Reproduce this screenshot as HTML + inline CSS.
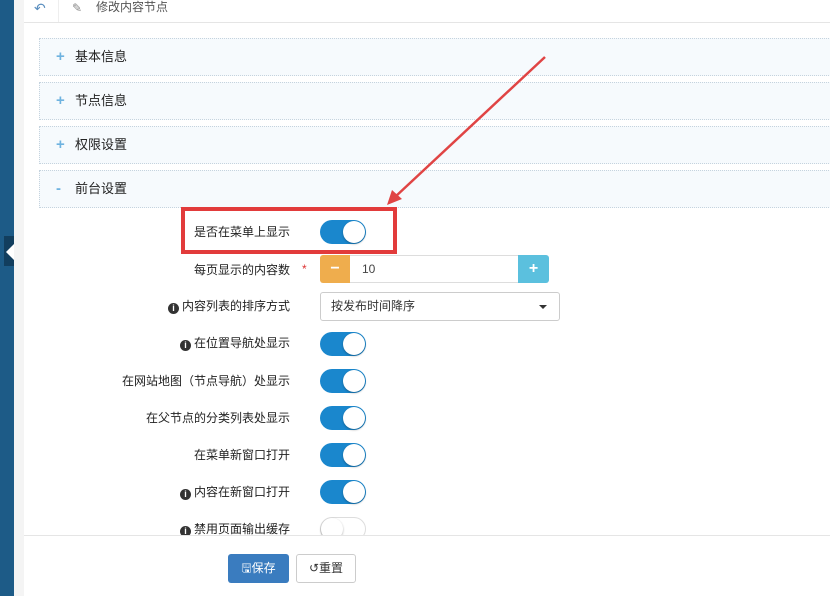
<!DOCTYPE html>
<html><head><meta charset="utf-8"><style>
*{box-sizing:border-box;margin:0;padding:0}
body{width:830px;height:596px;overflow:hidden;background:#fff;font-family:"Liberation Sans","Noto Sans CJK SC",sans-serif;font-size:12px;color:#333;position:relative}
.abs{position:absolute}
.sb{left:0;top:0;width:14px;height:596px;background:#1d5b87}
.gr{left:14px;top:0;width:10px;height:596px;background:#f4f4f4}
.hdr{left:24px;top:0;width:806px;height:23px;border-bottom:1px solid #e5e5e5;background:#fff}
.panel{left:39px;width:800px;height:38px;background:#f6fafd;border:1px dotted #c5d3de;font-size:13px;line-height:36px;padding-left:35px;color:#222}
.panel b{position:absolute;left:16px;color:#6fb3e0;font-weight:bold;font-size:15px}
.lbl{text-align:right;font-size:12px;color:#222}
.tg{left:320px;width:46px;height:24px;border-radius:12px;background:#1a87cd}
.tg::after{content:"";position:absolute;right:1px;top:1px;width:22px;height:22px;border-radius:50%;background:#fff;box-shadow:0 1px 2px rgba(0,0,0,.3)}
.tg.off{background:#fff;border:1px solid #ddd}
.tg.off::after{left:0;right:auto;top:0}
.i{display:inline-block;width:11px;height:11px;border-radius:50%;background:#333;color:#fff;font-size:9px;line-height:11px;text-align:center;font-weight:bold;margin-right:3px;vertical-align:-1px}
</style></head><body>
<div class="abs sb"></div>
<div class="abs" style="left:4px;top:236px;width:10px;height:30px;background:#123e5e"></div>
<div class="abs" style="left:6px;top:244px;width:0;height:0;border-top:8px solid transparent;border-bottom:8px solid transparent;border-right:8px solid #fff"></div>
<div class="abs gr"></div>
<div class="abs hdr">
<div class="abs" style="left:10px;top:0;color:#5b8fbf;font-size:14px;line-height:16px">&#x21B6;</div>
<div class="abs" style="left:34px;top:0;width:1px;height:22px;background:#eee"></div>
<div class="abs" style="left:48px;top:0;color:#888;font-size:12px;line-height:16px">&#x270E;</div>
<div class="abs" style="left:72px;top:0;color:#555;font-size:12px;line-height:15px">修改内容节点</div>
</div>
<div class="abs panel" style="top:38px"><b>+</b>基本信息</div>
<div class="abs panel" style="top:82px"><b>+</b>节点信息</div>
<div class="abs panel" style="top:126px"><b>+</b>权限设置</div>
<div class="abs panel" style="top:170px"><b>-</b>前台设置</div>

<div class="abs lbl" style="top:223px;left:0;width:290px">是否在菜单上显示</div>
<div class="abs tg" style="top:220px"></div>
<div class="abs lbl" style="top:261px;left:0;width:290px">每页显示的内容数</div>
<div class="abs" style="left:302px;top:262px;color:#d33">*</div>
<div class="abs" style="left:320px;top:255px;width:30px;height:28px;background:#efad4d;border-radius:3px 0 0 3px;color:#fff;text-align:center;line-height:27px;font-weight:bold;font-size:16px">−</div>
<div class="abs" style="left:350px;top:255px;width:169px;height:28px;border:1px solid #ddd;border-left:0;border-right:0;padding-left:12px;line-height:26px;color:#444">10</div>
<div class="abs" style="left:518px;top:255px;width:31px;height:28px;background:#5bc0de;border-radius:0 3px 3px 0;color:#fff;text-align:center;line-height:27px;font-weight:bold;font-size:16px">+</div>
<div class="abs lbl" style="top:297px;left:0;width:290px"><span class="i">i</span>内容列表的排序方式</div>
<div class="abs" style="left:320px;top:292px;width:240px;height:29px;border:1px solid #ccc;border-radius:3px;padding-left:10px;line-height:27px;color:#333">按发布时间降序<span class="abs" style="right:12px;top:12px;border-left:4px solid transparent;border-right:4px solid transparent;border-top:4px solid #333"></span></div>
<div class="abs lbl" style="top:334px;left:0;width:290px"><span class="i">i</span>在位置导航处显示</div>
<div class="abs tg" style="top:332px"></div>
<div class="abs lbl" style="top:372px;left:0;width:290px">在网站地图（节点导航）处显示</div>
<div class="abs tg" style="top:369px"></div>
<div class="abs lbl" style="top:409px;left:0;width:290px">在父节点的分类列表处显示</div>
<div class="abs tg" style="top:406px"></div>
<div class="abs lbl" style="top:446px;left:0;width:290px">在菜单新窗口打开</div>
<div class="abs tg" style="top:443px"></div>
<div class="abs lbl" style="top:483px;left:0;width:290px"><span class="i">i</span>内容在新窗口打开</div>
<div class="abs tg" style="top:480px"></div>
<div class="abs lbl" style="top:520px;left:0;width:290px"><span class="i">i</span>禁用页面输出缓存</div>
<div class="abs tg off" style="top:517px"></div>
<div class="abs" style="left:24px;top:535px;width:806px;height:61px;background:#fff;border-top:1px solid #e5e5e5"></div>
<div class="abs" style="left:228px;top:554px;width:61px;height:29px;background:#3a7cbf;border-radius:3px;color:#fff;line-height:28px;text-align:center;font-size:12px">&#x1F5AB;保存</div>
<div class="abs" style="left:296px;top:554px;width:60px;height:29px;background:#fff;border:1px solid #ccc;border-radius:3px;color:#333;line-height:27px;text-align:center;font-size:12px">↺重置</div>

<div class="abs" style="left:181px;top:207px;width:216px;height:47px;border:4px solid #e23b3b"></div>
<svg class="abs" style="left:0;top:0" width="830" height="596">
<line x1="545" y1="57" x2="395" y2="197" stroke="#e04444" stroke-width="2.5"/>
<polygon points="387,205 392,190 402,199" fill="#e04444"/>
</svg>
</body></html>
